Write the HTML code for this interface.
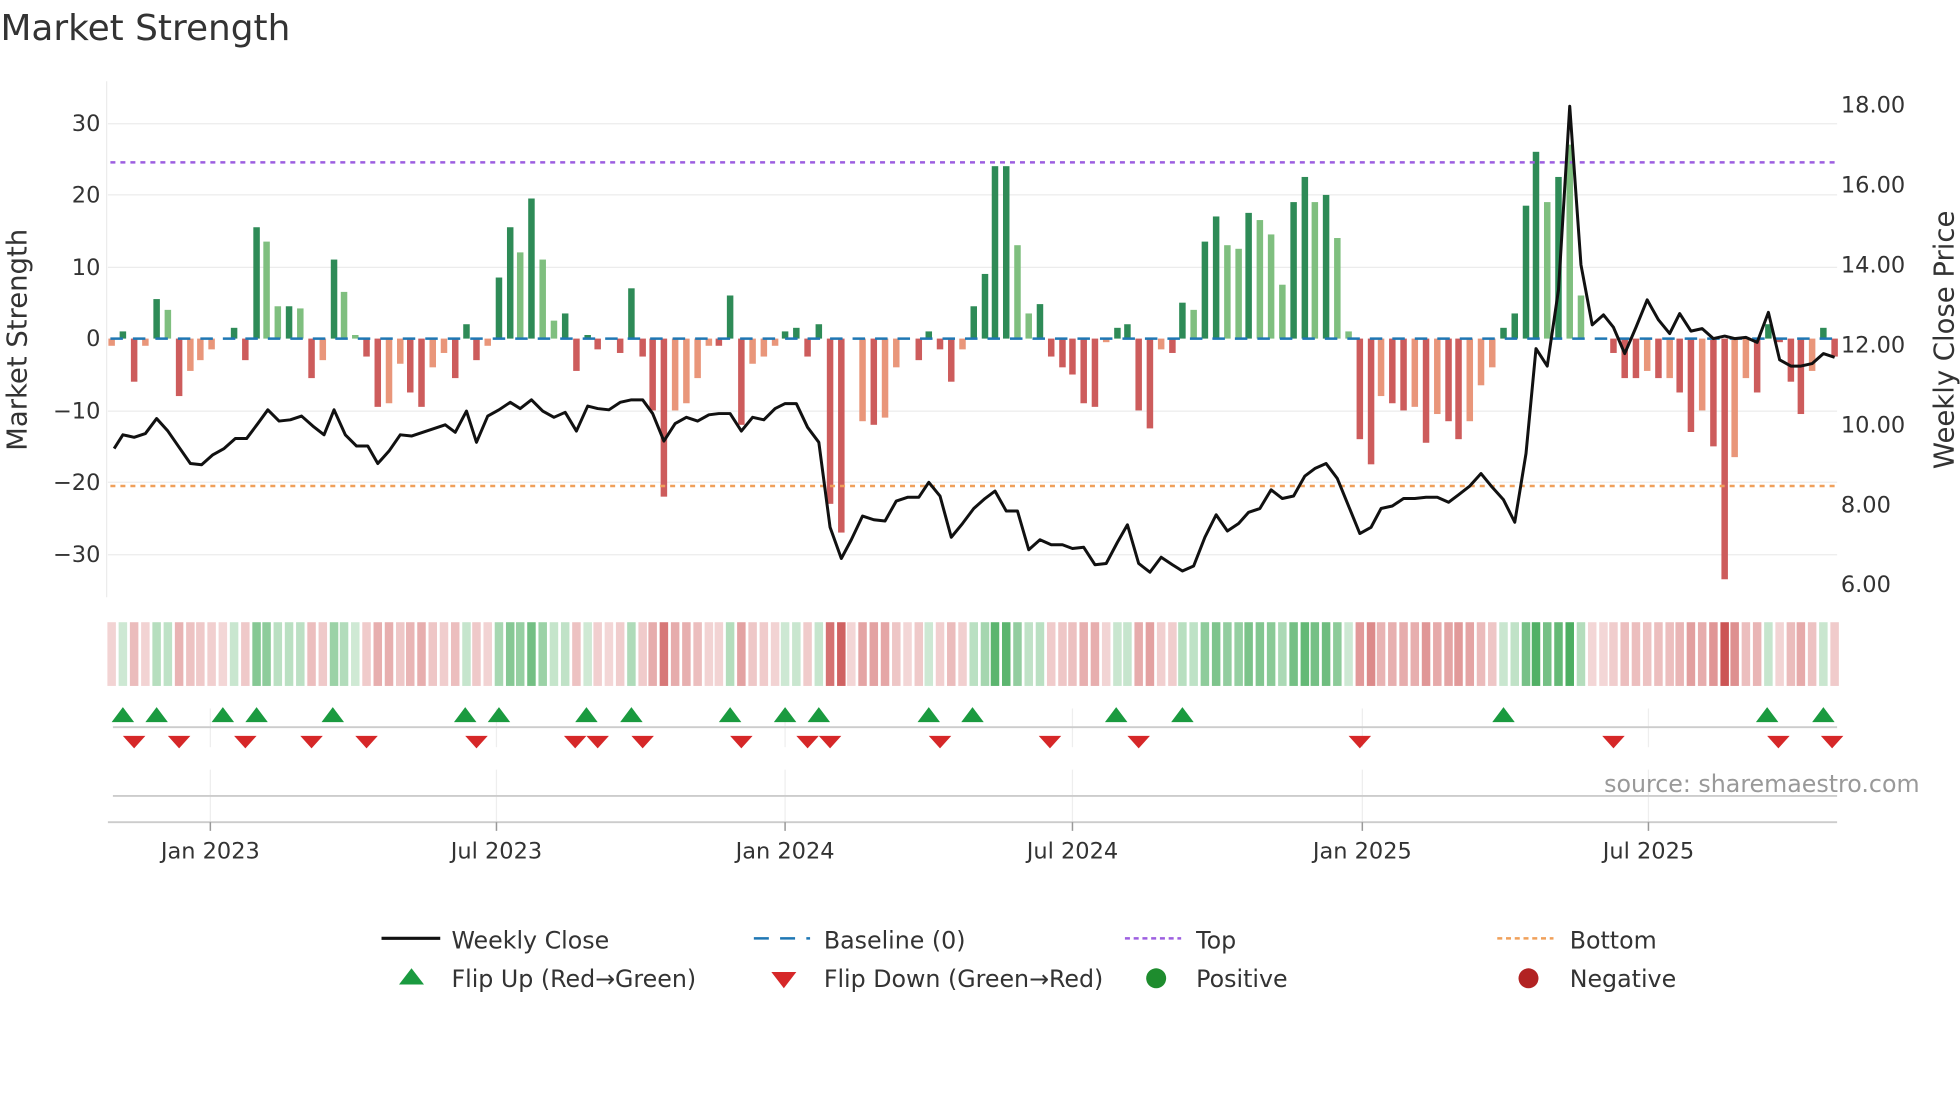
<!DOCTYPE html>
<html><head><meta charset="utf-8">
<style>
html,body{margin:0;padding:0;background:#fff;}
svg{display:block;font-family:"DejaVu Sans","Liberation Sans",sans-serif;}
</style></head>
<body>
<svg id="s" width="1960" height="1102" viewBox="0 0 1568 882" xmlns="http://www.w3.org/2000/svg">
<rect width="1568" height="882" fill="#fff"/>
<text x="0" y="32" font-size="28.5" fill="#333" textLength="232" lengthAdjust="spacingAndGlyphs">Market Strength</text>
<g stroke="#ececec" stroke-width="1">
<line x1="86" y1="99" x2="1470" y2="99"/><line x1="86" y1="156" x2="1470" y2="156"/><line x1="86" y1="214" x2="1470" y2="214"/>
<line x1="86" y1="329" x2="1470" y2="329"/><line x1="86" y1="386" x2="1470" y2="386"/><line x1="86" y1="444" x2="1470" y2="444"/>
<line x1="85" y1="65" x2="85" y2="478"/>
</g>
<g font-size="18" fill="#333" text-anchor="end">
<text x="80" y="105">30</text><text x="80" y="162">20</text><text x="80" y="220">10</text><text x="80" y="277">0</text>
<text x="80" y="335">−10</text><text x="80" y="392">−20</text><text x="80" y="450">−30</text>
</g>
<g font-size="18" fill="#333">
<text x="1473" y="90">18.00</text><text x="1473" y="154">16.00</text><text x="1473" y="218">14.00</text><text x="1473" y="282">12.00</text>
<text x="1473" y="346">10.00</text><text x="1473" y="410">8.00</text><text x="1473" y="474">6.00</text>
</g>
<text transform="translate(21,272) rotate(-90)" font-size="22" fill="#333" text-anchor="middle">Market Strength</text>
<text transform="translate(1563,272) rotate(-90)" font-size="22" fill="#333" text-anchor="middle">Weekly Close Price</text>
<g id="bars"></g>
<line x1="88" y1="271" x2="1470" y2="271" stroke="#1f77b4" stroke-width="2" stroke-dasharray="10,8"/>
<line x1="88" y1="130" x2="1470" y2="130" stroke="#9d5fe0" stroke-width="2" stroke-dasharray="4,4"/>
<line x1="88" y1="389" x2="1470" y2="389" stroke="#f0a05a" stroke-width="2" stroke-dasharray="4,4"/>
<polyline id="pl" fill="none" stroke="#111" stroke-width="2.4" stroke-linejoin="round"/>
<g id="heat"></g>
<g stroke="#eee" stroke-width="1">
<line x1="168" y1="567" x2="168" y2="598"/><line x1="397" y1="567" x2="397" y2="598"/><line x1="628" y1="567" x2="628" y2="598"/>
<line x1="858" y1="567" x2="858" y2="598"/><line x1="1090" y1="567" x2="1090" y2="598"/><line x1="1319" y1="567" x2="1319" y2="598"/>
<line x1="168" y1="616" x2="168" y2="658"/><line x1="397" y1="616" x2="397" y2="658"/><line x1="628" y1="616" x2="628" y2="658"/>
<line x1="858" y1="616" x2="858" y2="658"/><line x1="1090" y1="616" x2="1090" y2="658"/><line x1="1319" y1="616" x2="1319" y2="658"/>
</g>
<line x1="90" y1="582" x2="1470" y2="582" stroke="#ccc" stroke-width="1.5"/>
<line x1="90" y1="637" x2="1470" y2="637" stroke="#ccc" stroke-width="1.5"/>
<line x1="86" y1="658" x2="1470" y2="658" stroke="#ccc" stroke-width="1.5"/>
<g id="flips"></g>
<g stroke="#999" stroke-width="1.2">
<line x1="168" y1="658" x2="168" y2="665"/><line x1="397" y1="658" x2="397" y2="665"/><line x1="628" y1="658" x2="628" y2="665"/>
<line x1="858" y1="658" x2="858" y2="665"/><line x1="1090" y1="658" x2="1090" y2="665"/><line x1="1319" y1="658" x2="1319" y2="665"/>
</g>
<g font-size="18" fill="#333" text-anchor="middle">
<text x="168" y="687">Jan 2023</text><text x="397" y="687">Jul 2023</text><text x="628" y="687">Jan 2024</text>
<text x="858" y="687">Jul 2024</text><text x="1090" y="687">Jan 2025</text><text x="1319" y="687">Jul 2025</text>
</g>
<text x="1536" y="634" font-size="19" fill="#999" text-anchor="end">source: sharemaestro.com</text>
<g font-size="19" fill="#333">
<line x1="305" y1="751" x2="352" y2="751" stroke="#111" stroke-width="2.5"/><text x="361" y="759">Weekly Close</text>
<line x1="603" y1="751" x2="648" y2="751" stroke="#1f77b4" stroke-width="2" stroke-dasharray="12,9"/><text x="659" y="759">Baseline (0)</text>
<line x1="900" y1="751" x2="945" y2="751" stroke="#9d5fe0" stroke-width="2" stroke-dasharray="4,3"/><text x="957" y="759">Top</text>
<line x1="1198" y1="751" x2="1243" y2="751" stroke="#f0a05a" stroke-width="2" stroke-dasharray="4,3"/><text x="1256" y="759">Bottom</text>
<polygon points="319,788 339,788 329,775" fill="#1a9a3f"/><text x="361" y="790">Flip Up (Red→Green)</text>
<polygon points="617,778 637,778 627,791" fill="#d62728"/><text x="659" y="790">Flip Down (Green→Red)</text>
<circle cx="925" cy="783" r="8" fill="#1e8c2e"/><text x="957" y="790">Positive</text>
<circle cx="1223" cy="783" r="8" fill="#b22222"/><text x="1256" y="790">Negative</text>
</g>
</svg>
<script>
var D=[[89,-1,3],[98,1,0],[107,-6,2],[116,-1,3],[125,5.5,0],[134,4,1],[143,-8,2],[152,-4.5,3],[160,-3,3],[169,-1.5,3],[178,0,0],[187,1.5,0],[196,-3,2],[205,15.5,0],[213,13.5,1],[222,4.5,1],[231,4.5,0],[240,4.2,1],[249,-5.5,2],[258,-3,3],[267,11,0],[275,6.5,1],[284,0.5,1],[293,-2.5,2],[302,-9.5,2],[311,-9,3],[320,-3.5,3],[328,-7.5,2],[337,-9.5,2],[346,-4,3],[355,-2,3],[364,-5.5,2],[373,2,0],[381,-3,2],[390,-1,3],[399,8.5,0],[408,15.5,0],[416,12,1],[425,19.5,0],[434,11,1],[443,2.5,1],[452,3.5,0],[461,-4.5,2],[470,0.5,0],[478,-1.5,2],[487,0,0],[496,-2,2],[505,7,0],[514,-2.5,2],[522,-10,2],[531,-22,2],[540,-10,3],[549,-9,3],[558,-5.5,3],[567,-1,3],[575,-1,2],[584,6,0],[593,-12,2],[602,-3.5,3],[611,-2.5,3],[620,-1,3],[628,1,0],[637,1.5,0],[646,-2.5,2],[655,2,0],[664,-23,2],[673,-27,2],[681,0,0],[690,-11.5,3],[699,-12,2],[708,-11,3],[717,-4,3],[726,0,0],[735,-3,2],[743,1,0],[752,-1.5,2],[761,-6,2],[770,-1.5,3],[779,4.5,0],[788,9,0],[796,24,0],[805,24,0],[814,13,1],[823,3.5,1],[832,4.8,0],[841,-2.5,2],[850,-4,2],[858,-5,2],[867,-9,2],[876,-9.5,2],[885,-0.5,3],[894,1.5,0],[902,2,0],[911,-10,2],[920,-12.5,2],[929,-1.5,3],[938,-2,2],[946,5,0],[955,4,1],[964,13.5,0],[973,17,0],[982,13,1],[991,12.5,1],[999,17.5,0],[1008,16.5,1],[1017,14.5,1],[1026,7.5,1],[1035,19,0],[1044,22.5,0],[1052,19,1],[1061,20,0],[1070,14,1],[1079,1,1],[1088,-14,2],[1097,-17.5,2],[1105,-8,3],[1114,-9,2],[1123,-10,2],[1132,-9.5,3],[1141,-14.5,2],[1150,-10.5,3],[1159,-11.5,2],[1167,-14,2],[1176,-11.5,3],[1185,-6.5,3],[1194,-4,3],[1203,1.5,0],[1212,3.5,0],[1221,18.5,0],[1229,26,0],[1238,19,1],[1247,22.5,0],[1256,27,1],[1265,6,1],[1274,0,0],[1283,0,0],[1291,-2,2],[1300,-5.5,2],[1309,-5.5,2],[1318,-4.5,3],[1327,-5.5,2],[1336,-5.5,3],[1344,-7.5,2],[1353,-13,2],[1362,-10,3],[1371,-15,2],[1380,-33.5,2],[1388,-16.5,3],[1397,-5.5,3],[1406,-7.5,2],[1415,2,0],[1424,-0.5,2],[1433,-6,2],[1441,-10.5,2],[1450,-4.5,3],[1459,1.5,0],[1468,-2.5,2]];
var C=["#2e8b57","#7fbf7f","#cd5c5c","#e9967a"];
var b="",h="";
D.forEach(function(d){var x=d[0],v=d[1];var y0=271,y1=271-v*5.75;
 if(v!==0)b+='<rect x="'+(x-2.6)+'" y="'+Math.min(y0,y1)+'" width="5.2" height="'+Math.abs(y1-y0)+'" fill="'+C[d[2]]+'"/>';
 var a=0.22+Math.min(Math.abs(v)/30,1)*0.7;var col=v>0?"46,160,70":"200,70,70";if(v==0){col="200,70,70";a=0.22;}
 h+='<rect x="'+(x-3.4)+'" y="498" width="6.8" height="51" fill="rgba('+col+','+a.toFixed(2)+')"/>';
});
document.getElementById("bars").innerHTML=b;document.getElementById("heat").innerHTML=h;
var up=[98,125,178,205,266,372,399,469,505,584,628,655,743,778,893,946,1203,1414,1459];
var dn=[107,143,196,249,293,381,460,478,514,593,646,664,752,840,911,1088,1291,1423,1466];
var f="";up.forEach(function(x){f+='<polygon points="'+(x-9)+',578 '+(x+9)+',578 '+x+',566" fill="#1a9a3f"/>';});
dn.forEach(function(x){f+='<polygon points="'+(x-9)+',589 '+(x+9)+',589 '+x+',599" fill="#d62728"/>';});
document.getElementById("flips").innerHTML=f;
document.getElementById("pl").setAttribute("points","91,359 98,348 107,350 116,347 125,335 134,345 143,358 152,371 161,372 170,364 179,359 188,351 197,351 206,339 214,328 223,337 232,336 241,333 250,341 259,348 267,328 276,348 285,357 294,357 302,371 311,361 320,348 329,349 338,346 347,343 356,340 364,346 373,329 381,354 390,333 399,328 408,322 416,327 425,320 434,329 443,334 452,330 461,345 470,325 478,327 487,328 496,322 505,320 514,320 522,331 531,353 540,339 549,334 558,337 567,332 575,331 584,331 593,345 602,334 611,336 620,327 628,323 637,323 646,342 655,354 664,422 673,447 681,432 690,413 699,416 708,417 717,401 726,398 735,398 743,386 752,397 761,430 770,419 779,407 788,399 796,393 805,409 814,409 823,440 832,432 841,436 850,436 858,439 867,438 876,452 885,451 894,434 902,420 911,451 920,458 929,446 938,452 946,457 955,453 964,430 973,412 982,425 991,419 999,410 1008,407 1017,392 1026,399 1035,397 1044,381 1052,375 1061,371 1070,383 1079,405 1088,427 1097,422 1105,407 1114,405 1123,399 1132,399 1141,398 1150,398 1159,402 1167,396 1176,389 1185,379 1194,390 1203,400 1212,418 1221,363 1229,279 1238,293 1247,232 1256,85 1265,212 1274,260 1283,252 1291,262 1300,283 1309,262 1318,240 1327,256 1336,267 1344,251 1353,265 1362,263 1371,271 1380,269 1388,271 1397,270 1406,274 1415,250 1424,288 1433,293 1441,293 1450,291 1459,283 1468,286");
</script>
</body></html>
